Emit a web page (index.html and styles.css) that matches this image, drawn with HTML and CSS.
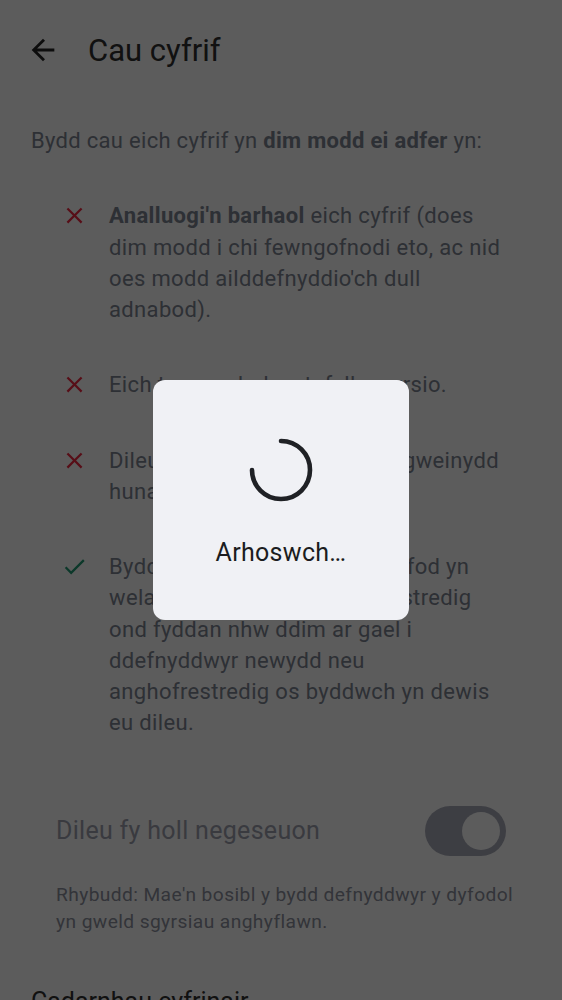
FILE: index.html
```html
<!DOCTYPE html>
<html lang="cy">
<head>
<meta charset="utf-8">
<title>Cau cyfrif</title>
<link rel="stylesheet" href="styles.css">
</head>
<body>
<div class="page">
  <header class="appbar">
    <svg class="back" viewBox="0 0 24 24" width="34" height="34"><path d="M20 11H7.83l5.59-5.59L12 4l-8 8 8 8 1.41-1.41L7.83 13H20v-2z"/></svg>
    <h1 class="title">Cau cyfrif</h1>
  </header>
  <main class="content">
    <p class="intro">Bydd cau eich cyfrif yn <b>dim modd ei adfer</b> yn:</p>
    <ul class="list">
      <li class="item">
        <svg class="icon icon-x" viewBox="0 0 24 24"><path d="M19 6.41L17.59 5 12 10.59 6.41 5 5 6.41 10.59 12 5 17.59 6.41 19 12 13.41 17.59 19 19 17.59 13.41 12z"/></svg>
        <p class="item-text"><b>Analluogi'n barhaol</b> eich cyfrif (does dim modd i chi fewngofnodi eto, ac nid oes modd ailddefnyddio'ch dull adnabod).</p>
      </li>
      <li class="item">
        <svg class="icon icon-x" viewBox="0 0 24 24"><path d="M19 6.41L17.59 5 12 10.59 6.41 5 5 6.41 10.59 12 5 17.59 6.41 19 12 13.41 17.59 19 19 17.59 13.41 12z"/></svg>
        <p class="item-text">Eich tynnu o bob ystafell sgwrsio.</p>
      </li>
      <li class="item">
        <svg class="icon icon-x" viewBox="0 0 24 24"><path d="M19 6.41L17.59 5 12 10.59 6.41 5 5 6.41 10.59 12 5 17.59 6.41 19 12 13.41 17.59 19 19 17.59 13.41 12z"/></svg>
        <p class="item-text">Dileu manylion eich cyfrif o'n gweinydd hunaniaeth.</p>
      </li>
      <li class="item">
        <svg class="icon icon-check" viewBox="0 0 24 24"><path d="M9 16.17L4.83 12l-1.42 1.41L9 19 21 7l-1.41-1.41z"/></svg>
        <p class="item-text">Bydd eich negeseuon yn dal i fod yn weladwy i ddefnyddwyr cofrestredig ond fyddan nhw ddim ar gael i ddefnyddwyr newydd neu anghofrestredig os byddwch yn dewis eu dileu.</p>
      </li>
    </ul>
    <div class="toggle-row">
      <span class="toggle-label">Dileu fy holl negeseuon</span>
      <span class="switch"><span class="thumb"></span></span>
    </div>
    <p class="warning">Rhybudd: Mae'n bosibl y bydd defnyddwyr y dyfodol yn gweld sgyrsiau anghyflawn.</p>
    <div class="field-label">Cadarnhau cyfrinair</div>
  </main>
</div>
<div class="scrim">
  <div class="dialog" role="dialog" aria-label="Arhoswch">
    <svg class="spinner" viewBox="0 0 64 64" width="64" height="64"><path d="M32 3 A29 29 0 1 1 3 32" fill="none" stroke-width="4.6" stroke-linecap="round"/></svg>
    <div class="dialog-text">Arhoswch…</div>
  </div>
</div>
</body>
</html>
```

FILE: styles.css
```css
html, body {
  margin: 0;
  padding: 0;
}
body {
  width: 562px;
  height: 1000px;
  overflow: hidden;
  background: #cccccc;
  font-family: Roboto, "Noto Sans", sans-serif;
  color: #656a75;
}
.page {
  display: flex;
  flex-direction: column;
}
.appbar {
  height: 100px;
  display: flex;
  align-items: center;
  padding: 0 0 0 26px;
  gap: 28px;
  box-sizing: border-box;
}
.back {
  fill: #1d1d1d;
  flex: none;
}
.title {
  margin: 0;
  font-size: 31px;
  font-weight: 400;
  color: #262626;
}
.content {
  padding: 0 31px;
}
.intro {
  margin: 25px 0 0;
  font-size: 22px;
  line-height: 31.25px;
  letter-spacing: 0.3px;
}
.intro b, .item-text b {
  font-weight: 700;
}
.list {
  list-style: none;
  margin: 44px 0 0;
  padding: 0 26px 0 30px;
  display: flex;
  flex-direction: column;
  gap: 44px;
}
.item {
  display: flex;
  gap: 21px;
  align-items: flex-start;
}
.icon {
  width: 27px;
  height: 27px;
  flex: none;
  margin-top: 2px;
}
.icon-x {
  fill: #c21f34;
}
.icon-check {
  fill: #1b7d5e;
}
.item-text {
  margin: 0;
  font-size: 22px;
  line-height: 31.25px;
  letter-spacing: 0.35px;
}
.toggle-row {
  margin-top: 67px;
  padding: 0 25px;
  display: flex;
  align-items: center;
  justify-content: space-between;
  height: 50px;
}
.toggle-label {
  font-size: 25px;
  letter-spacing: 0.3px;
  color: #7f818c;
}
.switch {
  width: 81px;
  height: 50px;
  border-radius: 25px;
  background: #888a95;
  display: flex;
  align-items: center;
  justify-content: flex-end;
  padding: 0 6px;
  box-sizing: border-box;
}
.thumb {
  width: 38px;
  height: 38px;
  border-radius: 50%;
  background: #cccccc;
}
.warning {
  margin: 25px 0 0;
  padding: 0 0 0 25px;
  font-size: 19.2px;
  line-height: 27px;
  letter-spacing: 0.4px;
  color: #71747f;
}
.field-label {
  margin-top: 52px;
  font-size: 25px;
  line-height: 30px;
  color: #262626;
}
.scrim {
  position: fixed;
  inset: 0;
  background: rgba(0, 0, 0, 0.55);
  display: flex;
  align-items: center;
  justify-content: center;
}
.dialog {
  width: 256px;
  height: 240px;
  box-sizing: border-box;
  border-radius: 12px;
  background: #f0f1f5;
  display: flex;
  flex-direction: column;
  align-items: center;
  padding-top: 58px;
  gap: 36px;
}
.spinner {
  stroke: #1f2125;
  flex: none;
}
.dialog-text {
  font-size: 25px;
  line-height: 30px;
  letter-spacing: 0.3px;
  color: #1b1c20;
}
```
